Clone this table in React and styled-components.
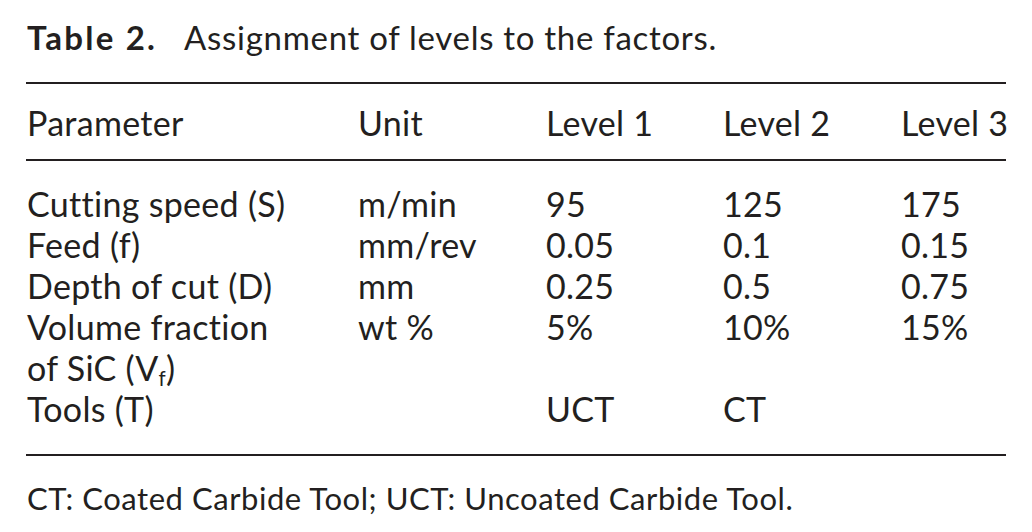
import React from 'react';
import styled, { createGlobalStyle } from 'styled-components';

const GlobalStyle = createGlobalStyle`
    html, body {
        margin: 0;
        padding: 0;
        background: #ffffff;
    }
`;

const Figure = styled.section`
    width: 980px;
    margin-left: 26px;
    padding-top: 17px;
    color: #231f20;
    font-family: Lato, "Open Sans", "Liberation Sans", sans-serif;
`;

const Caption = styled.div`
    font-size: 33px;
    line-height: 40px;
    letter-spacing: 0.7px;
    padding-left: 1px;
    margin-bottom: 25px;
    white-space: nowrap;
`;

const Label = styled.strong`
    font-weight: 700;
    letter-spacing: 2.2px;
    margin-right: 27px;
`;

const Section = styled.div`
    padding: ${(p) => p.$pad};
    border-top: ${(p) => (p.$top ? '2px solid #231f20' : 'none')};
    border-bottom: 2px solid #231f20;
`;

const Row = styled.div`
    display: grid;
    grid-template-columns: 331px 188px 177px 178px 1fr;
    font-size: 34px;
    line-height: 41px;
    letter-spacing: 0.3px;
    padding-left: 1px;
`;

const Cell = styled.div`
    white-space: nowrap;
`;

const Sub = styled.sub`
    font-size: 0.6em;
    line-height: 0;
    vertical-align: -0.25em;
`;

const Footnote = styled.p`
    margin: 22px 0 0;
    padding-left: 1px;
    font-size: 31px;
    line-height: 40px;
    letter-spacing: 0.55px;
    white-space: nowrap;
`;

const rows = [
    { param: 'Cutting speed (S)', unit: 'm/min', levels: ['95', '125', '175'] },
    { param: 'Feed (f)', unit: 'mm/rev', levels: ['0.05', '0.1', '0.15'] },
    { param: 'Depth of cut (D)', unit: 'mm', levels: ['0.25', '0.5', '0.75'] },
    {
        param: (
            <>
                Volume fraction
                <br />
                of SiC (V<Sub>f</Sub>)
            </>
        ),
        unit: 'wt %',
        levels: ['5%', '10%', '15%'],
    },
    { param: 'Tools (T)', unit: '', levels: ['UCT', 'CT', ''] },
];

const App = () => (
    <>
        <GlobalStyle />
        <Figure>
            <Caption>
                <Label>Table 2.</Label>
                Assignment of levels to the factors.
            </Caption>
            <Section $top $pad="18px 0 16px">
                <Row>
                    <Cell>Parameter</Cell>
                    <Cell>Unit</Cell>
                    <Cell>Level 1</Cell>
                    <Cell>Level 2</Cell>
                    <Cell>Level 3</Cell>
                </Row>
            </Section>
            <Section $pad="22px 0 25px">
                {rows.map((row, i) => (
                    <Row key={i}>
                        <Cell>{row.param}</Cell>
                        <Cell>{row.unit}</Cell>
                        {row.levels.map((v, j) => (
                            <Cell key={j}>{v}</Cell>
                        ))}
                    </Row>
                ))}
            </Section>
            <Footnote>CT: Coated Carbide Tool; UCT: Uncoated Carbide Tool.</Footnote>
        </Figure>
    </>
);

export default App;
